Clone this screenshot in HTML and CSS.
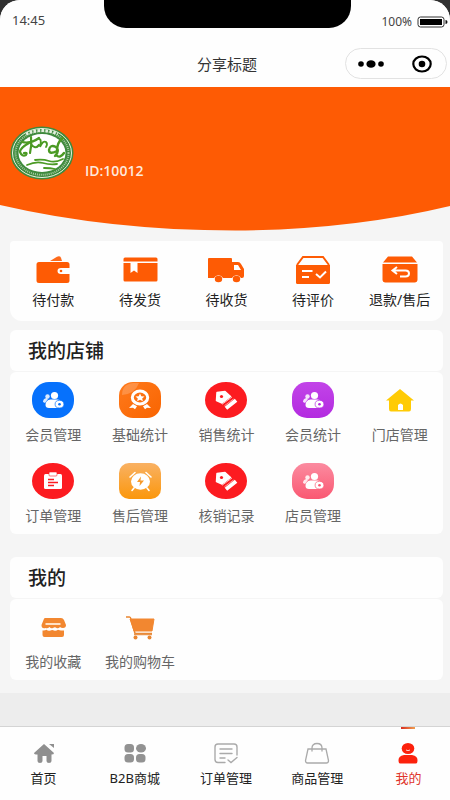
FILE: index.html
```html
<!DOCTYPE html>
<html lang="zh-CN">
<head>
<meta charset="utf-8">
<meta name="viewport" content="width=device-width, initial-scale=1">
<title>分享标题</title>
<link rel="stylesheet" href="styles.css">
</head>
<body>
<svg class="defs" aria-hidden="true">
  <defs>
    <linearGradient id="g-orange" x1="0" y1="0" x2="1" y2="1"><stop offset="0" stop-color="#ff7a1c"/><stop offset="1" stop-color="#f96400"/></linearGradient>
    <linearGradient id="g-purple" x1="0" y1="0" x2="0" y2="1"><stop offset="0" stop-color="#c244e8"/><stop offset="1" stop-color="#b32be0"/></linearGradient>
    <linearGradient id="g-amber" x1="0" y1="0" x2="0" y2="1"><stop offset="0" stop-color="#f9b163"/><stop offset="1" stop-color="#fb970c"/></linearGradient>
    <linearGradient id="g-pink" x1="0" y1="0" x2="0" y2="1"><stop offset="0" stop-color="#fb8ba0"/><stop offset="1" stop-color="#fa5872"/></linearGradient>
    <symbol id="people" viewBox="0 0 42 36">
      <circle cx="15.500" cy="14.500" r="2.200" fill="#fff" opacity=".85"/>
      <path d="M11 20q0-3.500 3.500-4l1.500 1-3 4z" fill="#fff" opacity=".85"/>
      <circle cx="22.500" cy="13.500" r="3.600" fill="#fff"/>
      <path d="M13.500 23q0-5 5-5.500h7q5 .5 5 4.500t-4 4H17q-3.500 0-3.500-3z" fill="#fff"/>
      <ellipse cx="27.500" cy="22.200" rx="4.400" ry="3.800" fill="#fff" stroke="currentColor" stroke-width=".7"/>
      <circle cx="27.500" cy="22.200" r="1.300" fill="currentColor"/>
    </symbol>
    <symbol id="ticket" viewBox="0 0 42 36">
      <ellipse cx="21" cy="18" rx="21" ry="18" fill="#fc1b20"/>
      <path d="M12 10.500l8-1 5.500 5-8.500 6.500-5.500-2.500z" fill="#fff" stroke="#fff" stroke-width="1.500" stroke-linejoin="round"/>
      <circle cx="16.500" cy="14.500" r="1.600" fill="#fc1b20"/>
      <path d="M17 22.300l10-7.300" stroke="#ffc4c4" stroke-width="1"/>
      <path d="M19.500 23.700l9-6.700" stroke="#ff9c9c" stroke-width="1"/>
      <path d="M22.500 25l7-5.500" stroke="#fff" stroke-width="4" stroke-linecap="square"/>
    </symbol>
  </defs>
</svg>
<div class="app">
  <header class="top">
    <div class="notch"></div>
    <div class="status">
      <span class="time">14:45</span>
      <span class="power">100%
        <svg width="31" height="12" viewBox="0 0 31 12" aria-hidden="true"><rect x="1" y="1" width="26" height="10" rx="2.500" fill="#fff" stroke="#333"/><rect x="3" y="3" width="22" height="6" fill="#000"/><path d="M28.500 4q2 0 2 2t-2 2z" fill="#111"/></svg>
      </span>
    </div>
    <div class="titlebar">
      <h1>分享标题</h1>
      <div class="capsule">
        <button type="button" aria-label="更多"><svg width="28" height="10" viewBox="0 0 28 10"><circle cx="4" cy="5" r="2.800"/><ellipse cx="14" cy="5" rx="4.600" ry="3.800"/><circle cx="24" cy="5" r="2.800"/></svg></button>
        <button type="button" aria-label="关闭"><svg width="20" height="18" viewBox="0 0 20 18"><ellipse cx="10" cy="9" rx="8.700" ry="7.500" fill="none" stroke="#000" stroke-width="2.200"/><circle cx="10" cy="9" r="3.300"/></svg></button>
      </div>
    </div>
  </header>

  <section class="profile">
    <svg class="curve" viewBox="0 0 450 144" preserveAspectRatio="none" aria-hidden="true"><path d="M0 0H450V119Q350 143 235 143.500Q110 143.500 0 118z" fill="#fe5b04"/></svg>
    <div class="user">
      <svg width="64" height="54" viewBox="0 0 64 54" role="img" aria-label="头像">
        <ellipse cx="32" cy="27" rx="31.500" ry="26.500" fill="#3f8a3d"/>
        <ellipse cx="32" cy="27" rx="29.500" ry="24.500" fill="none" stroke="#e8f2e0" stroke-width="1"/>
        <ellipse cx="32" cy="27" rx="26.500" ry="21.800" fill="none" stroke="#a9cba4" stroke-width="2" stroke-dasharray="1 1"/>
        <path d="M16 8q16-7 32 0" fill="none" stroke="#e4efdd" stroke-width="3" stroke-dasharray="2.500 1.500"/>
        <ellipse cx="32" cy="27" rx="23.500" ry="19" fill="#fff"/>
        <g fill="none" stroke="#4b9a24" stroke-linecap="round">
          <path d="M12 16q9 2 17-4M21 11q1 8-1 16M19 17q-9 5-9 9q2 5 6 3q2-3-2-2M21 18q4 6 8 1" stroke-width="2.200"/>
          <path d="M29 13q3 0 1 8q3-7 6-5q2 2 0 5" stroke-width="1.800"/>
          <path d="M53 12q-6 4-6 13q-8 4-8-1q1-6 7-3q4 4-1 9M46 29q4 4 8-2" stroke-width="2.400"/>
          <path d="M25 34q8-1 14 1t14-2M17 39q9-4 16-2t14 1M34 42q7 0 11 1" stroke-width="1.800"/>
        </g>
      </svg>
      <span class="uid">ID:10012</span>
    </div>
  </section>

  <main>
    <nav class="card orders" aria-label="订单">
      <a href="#"><svg width="36" height="30" viewBox="0 0 36 30"><path d="M15 6l7-4.300q3-1 4 1L27 6z" fill="#fe6a1c"/><path d="M4 7h28q2.500 0 2.500 2.500V13H26q-3.500 0-3.500 3T26 19h8.500v6.500q0 2.500-2.500 2.500H4Q1.500 28 1.500 25.500V9.500Q1.500 7 4 7z" fill="#fe5b04"/><circle cx="26" cy="16" r="1.300" fill="#fe5b04"/></svg>待付款</a>
      <a href="#"><svg width="36" height="30" viewBox="0 0 36 30"><path d="M3 2.500h31q1.500 0 1.500 1.500v2.500H1.500V4q0-1.500 1.500-1.500zM1.500 8H35.500v17q0 1.500-1.500 1.500H3q-1.500 0-1.500-1.500z" fill="#fe5b04"/><path d="M8.500 8h7v10l-3.500-2.500L8.500 18z" fill="#fff"/></svg>待发货</a>
      <a href="#"><svg width="38" height="30" viewBox="0 0 38 30"><path d="M2 3h22q1 0 1 1v3h6q2 0 3 2l3 5v7q0 2-2 2h-1a5 5 0 0 0-9 0H16a5 5 0 0 0-9 0H1V4q0-1 1-1z" fill="#fe5b04"/><path d="M27 10h4l3 5h-7z" fill="#fff"/><ellipse cx="11.500" cy="24" rx="3.700" ry="3.300" fill="#fe5b04"/><ellipse cx="29.500" cy="24" rx="3.700" ry="3.300" fill="#fe5b04"/></svg>待收货</a>
      <a href="#"><svg width="36" height="30" viewBox="0 0 36 30"><path d="M2 10L8 2h20l6 8" fill="none" stroke="#fe5b04" stroke-width="2"/><path d="M1 10h34v17.500q0 1.500-1.500 1.500h-31Q1 29 1 27.500z" fill="#fe5b04"/><path d="M7 16h10.500M7 22h7M21 19l4 3.500 6-6" fill="none" stroke="#fff" stroke-width="2"/></svg>待评价</a>
      <a href="#"><svg width="36" height="30" viewBox="0 0 36 30"><path d="M6 1.500h24l5 6H1zM.5 9h35v15.500q0 3-3 3h-29q-3 0-3-3z" fill="#fe5b04"/><path d="M11 15.500h12.500q3.500 0 3.500 3t-3.500 3H18M15 12l-4.500 3.500L15 19" fill="none" stroke="#fff" stroke-width="2"/></svg>退款/售后</a>
    </nav>

    <section class="group">
      <h2 class="card">我的店铺</h2>
      <nav class="card tiles" aria-label="我的店铺">
        <a href="#"><svg class="blue" width="42" height="36" viewBox="0 0 42 36"><rect width="42" height="36" rx="17" fill="#0671fc"/><use href="#people"/></svg>会员管理</a>
        <a href="#"><svg width="42" height="36" viewBox="0 0 42 36"><rect width="42" height="36" rx="14" fill="url(#g-orange)"/><path d="M3 13Q16 12 20 1H14Q3 2 3 13z" fill="#fff" opacity=".2"/><ellipse cx="21" cy="15.500" rx="7.700" ry="6.400" fill="none" stroke="#fff" stroke-width="3"/><path d="M21 11.500l1.300 2.700 3.200.3-2.300 2 .7 2.800-2.900-1.500-2.900 1.500.7-2.800-2.300-2 3.200-.3z" fill="#fff"/><path d="M14 22l-4 4 4-.3 2 1.500 2-3zM28 22l4 4-4-.3-2 1.500-2-3z" fill="#fff"/></svg>基础统计</a>
        <a href="#"><svg width="42" height="36"><use href="#ticket"/></svg>销售统计</a>
        <a href="#"><svg class="purple" width="42" height="36" viewBox="0 0 42 36"><rect width="42" height="36" rx="15" fill="url(#g-purple)"/><use href="#people"/></svg>会员统计</a>
        <a href="#"><svg width="42" height="36" viewBox="0 0 42 36"><path d="M21 7L35 18.500H32V27q0 2.500-2 2.500H12q-2 0-2-2.500V18.500H7z" fill="#ffcb05"/><path d="M19 28v-5q2.500-3 5 0v5z" fill="#fff"/></svg>门店管理</a>
        <a href="#"><svg width="42" height="36" viewBox="0 0 42 36"><ellipse cx="21" cy="18" rx="21" ry="18" fill="#fc1b20"/><rect x="12" y="11" width="18" height="15" rx="1.500" fill="#fff"/><rect x="17" y="9" width="8" height="4" rx="1" fill="#fff" stroke="#fc1b20" stroke-width=".6"/><path d="M16 16.500h6M16 19.500h10M16 22.500h6" stroke="#fc1b20" stroke-width="1.300"/></svg>订单管理</a>
        <a href="#"><svg width="42" height="36" viewBox="0 0 42 36"><rect width="42" height="36" rx="10" fill="url(#g-amber)"/><ellipse cx="21.500" cy="18.500" rx="9.500" ry="8.300" fill="#fff"/><path d="M11 14l5-4.500M32 14l-5-4.500M15 25l-2 2.500M28 25l2 2.500" stroke="#fff" stroke-width="1.600" stroke-linecap="round"/><path d="M22 13.500l-4 5.500h3l-.5 4 4.500-5.500h-3.500z" fill="#f79a2a"/></svg>售后管理</a>
        <a href="#"><svg width="42" height="36"><use href="#ticket"/></svg>核销记录</a>
        <a href="#"><svg class="pink" width="42" height="36" viewBox="0 0 42 36"><rect width="42" height="36" rx="15" fill="url(#g-pink)"/><use href="#people"/></svg>店员管理</a>
      </nav>
    </section>

    <section class="group">
      <h2 class="card">我的</h2>
      <nav class="card tiles" aria-label="我的">
        <a href="#"><svg width="42" height="36" viewBox="0 0 42 36"><path d="M13 9h16q2 0 3 2l2 5q0 3-3 3-2 0-3-1-1.500 2-3.500 1-1.500-1.500-3.500 0-2 1-3.500-1-2 2-4 1-4 1-4-3l2-5q.500-2 1.500-2z" fill="#f28730"/><path d="M13.500 15h15" stroke="#ffe0c4" stroke-width="2"/><path d="M10.500 21.500h1q2 0 3-.8 1.500 1.500 4 .8 1.500-.8 3.500 0 2 .8 4-.8 2 1 3.500.8h2.500V26q0 2-2 2H12.500q-2 0-2-2z" fill="#f28730"/></svg>我的收藏</a>
        <a href="#"><svg width="42" height="36" viewBox="0 0 42 36"><path d="M7 8h3.500q1 0 1.500 2l4 14.500h17" fill="none" stroke="#e9852f" stroke-width="1.500"/><path d="M11 10h24l-2 12H15z" fill="#f28730" stroke="#f28730" stroke-linejoin="round"/><path d="M15 25.500h18" stroke="#e9944c" stroke-width="1.500"/><circle cx="16.500" cy="28.500" r="2" fill="#e9852f"/><circle cx="30.500" cy="28.500" r="2" fill="#e9852f"/></svg>我的购物车</a>
      </nav>
    </section>
  </main>

  <footer class="tabs">
    <nav aria-label="主导航">
      <a href="#"><svg width="24" height="22" viewBox="0 0 24 22"><path d="M12 2L22 11q0 1.500-2.500 1.500V19q0 2-2.500 2t-2.500-2v-5h-4v5q0 2-2.500 2t-2.500-2v-6.500Q2 12.500 2 11z" fill="#8f8f8f"/><path d="M17 2h5v4z" fill="#8f8f8f"/></svg>首页</a>
      <a href="#"><svg width="24" height="22" viewBox="0 0 24 22" fill="#929292"><rect x="1.500" y="2" width="9.500" height="8.500" rx="3.500"/><ellipse cx="18" cy="6.300" rx="5" ry="4.300"/><rect x="1.500" y="12" width="9.500" height="8.500" rx="3.500"/><rect x="13" y="12" width="9.500" height="8.500" rx="3.500"/></svg>B2B商城</a>
      <a href="#"><svg width="26" height="22" viewBox="0 0 26 22" fill="none" stroke="#aaa" stroke-width="1.400" stroke-linecap="round"><path d="M12 20.500H5q-3 0-3-3V5q0-3 3-3h16q3 0 3 3v8M7 7h12M7 11.500h12M7 16h5M15 18l3 2.500 6-5"/></svg>订单管理</a>
      <a href="#"><svg width="26" height="22" viewBox="0 0 26 22" fill="none" stroke="#aaa" stroke-width="1.300" stroke-linecap="round"><path d="M4 7h18l2.500 11.500q0 2.500-2 2.500h-19q-2 0-2-2.500zM8 9V6q0-4.500 5-4.500t5 4.500v3"/></svg>商品管理</a>
      <a href="#" class="active" aria-current="page"><svg width="24" height="22" viewBox="0 0 24 22" fill="#fc210c"><ellipse cx="12" cy="6.500" rx="6.300" ry="5.500"/><path d="M8 13h8q6 1 5.500 6 0 2.500-2 2.500h-15q-2 0-2-2.500Q2 14 8 13z"/><path d="M10 8q2 1.300 4 0" fill="none" stroke="#fff" stroke-width=".8"/></svg>我的</a>
    </nav>
  </footer>
</div>
</body>
</html>
```
FILE: styles.css
```css
* { box-sizing: border-box; }

body {
  margin: 0;
  background: #303030;
  color: #222;
  font-family: "Noto Sans", "Noto Sans CJK SC", sans-serif;
  font-size: 14px;
  line-height: 20px;
}

a { color: inherit; text-decoration: none; }
svg { display: block; flex: none; }
.defs { position: absolute; width: 0; height: 0; }

.app {
  display: flex;
  flex-direction: column;
  min-height: 100vh;
  background: #ededed;
  border-radius: 20px 20px 0 0;
  overflow: hidden;
}

.top { position: relative; background: #fefefe; }

.notch {
  position: absolute;
  top: 0;
  left: 23%;
  right: 22%;
  height: 28px;
  background: #000;
  border-radius: 0 0 22px 22px;
}

.status {
  display: flex;
  justify-content: space-between;
  height: 40px;
  padding: 10px 2px 0 12px;
  color: #444;
  font-size: 13px;
}

.power {
  display: flex;
  align-items: center;
  gap: 5px;
  height: 24px;
  font-size: 12px;
}

.titlebar {
  display: grid;
  grid-template-columns: 1fr auto 1fr;
  align-items: center;
  height: 47px;
  padding: 0 3px 0 7px;
}

h1 {
  grid-column: 2;
  margin: 0;
  color: #333;
  font-size: 15px;
  font-weight: 400;
}

.capsule {
  display: flex;
  align-items: center;
  justify-content: space-between;
  justify-self: end;
  width: 102px;
  height: 31px;
  padding: 0 14px 0 11px;
  border: 1px solid #e2e2e2;
  border-radius: 16px;
}

.capsule button { padding: 0; border: 0; background: none; }

.profile {
  display: grid;
  height: 144px;
  background: #f5f5f5;
}

.curve, .user { grid-area: 1 / 1; }
.curve { width: 100%; height: 144px; }

.user {
  z-index: 1;
  display: flex;
  align-items: flex-end;
  gap: 11px;
  height: 93px;
  padding-left: 10px;
}

.uid {
  color: #ffe9dc;
  font-family: "Open Sans", "Noto Sans", sans-serif;
  font-size: 14px;
  font-weight: 600;
  line-height: 18px;
}

main {
  display: flex;
  flex-direction: column;
  padding: 10px 7px 13px 10px;
  background: #f5f5f5;
}

.card { background: #fefefe; border-radius: 6px; }

.orders, .tiles {
  display: grid;
  grid-template-columns: repeat(5, 1fr);
}

.orders a, .tiles a, .tabs a {
  display: flex;
  flex-direction: column;
  align-items: center;
  white-space: nowrap;
}

.orders {
  height: 80px;
  padding-top: 14px;
  border-radius: 4px 4px 12px 12px;
}

.orders a { gap: 5px; }

.group { margin-top: 9px; }
.group + .group { margin-top: 23px; }

h2 {
  height: 41px;
  margin: 0 0 1px;
  padding-left: 18px;
  font-size: 19px;
  font-weight: 500;
  line-height: 42px;
}

.tiles {
  row-gap: 18px;
  padding: 10px 0 8px;
  color: #666;
}

.tiles a { gap: 7px; }

.blue { color: #0671fc; }
.purple { color: #b32be0; }
.pink { color: #fa5872; }

.tabs {
  margin-top: auto;
  height: 74px;
  overflow: hidden;
  background: #fefefe;
  border-top: 1px solid #d4d4d4;
}

.tabs nav {
  display: grid;
  grid-template-columns: repeat(5, 1fr);
  margin: 0 -4px 0 -2px;
}

.tabs a {
  position: relative;
  gap: 4px;
  padding-top: 15px;
  font-size: 13px;
}

.tabs .active { color: #e0352c; }

.active::before {
  content: "";
  position: absolute;
  top: 0;
  width: 14px;
  height: 2px;
  background: linear-gradient(90deg, #d92c20, #f0a050);
}
```
